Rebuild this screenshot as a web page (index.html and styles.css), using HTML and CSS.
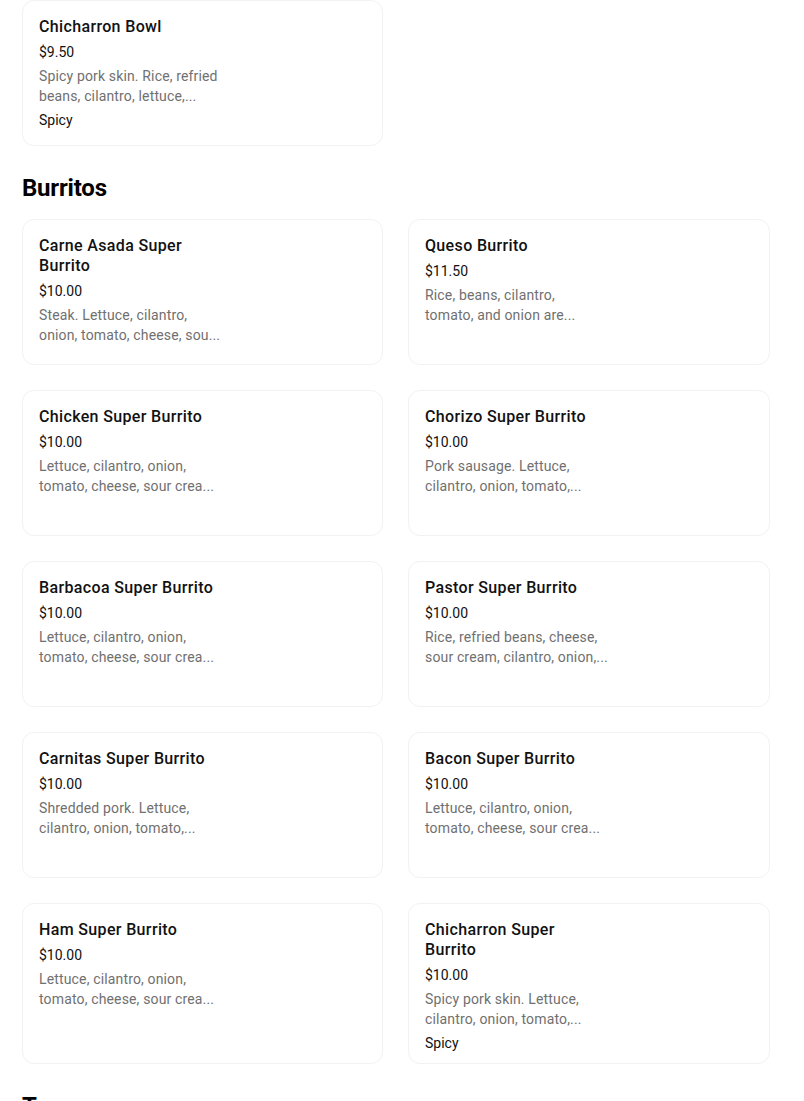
FILE: index.html
```html
<!DOCTYPE html>
<html lang="en">
<head>
<meta charset="utf-8">
<title>Menu</title>
<link rel="stylesheet" href="styles.css">
</head>
<body>
<main class="page">
  <section class="section">
    <div class="grid">
      <article class="card">
        <div class="info">
          <h3 class="title">Chicharron Bowl</h3>
          <div class="price">$9.50</div>
          <p class="desc"><span>Spicy pork skin. Rice, refried</span><span>beans, cilantro, lettuce,...</span></p>
          <div class="tag">Spicy</div>
        </div>
      </article>
    </div>
  </section>

  <section class="section">
    <h2 class="heading">Burritos</h2>
    <div class="grid">
      <article class="card">
        <div class="info">
          <h3 class="title"><span>Carne Asada Super</span><span>Burrito</span></h3>
          <div class="price">$10.00</div>
          <p class="desc"><span>Steak. Lettuce, cilantro,</span><span>onion, tomato, cheese, sou...</span></p>
        </div>
      </article>
      <article class="card">
        <div class="info">
          <h3 class="title">Queso Burrito</h3>
          <div class="price">$11.50</div>
          <p class="desc"><span>Rice, beans, cilantro,</span><span>tomato, and onion are...</span></p>
        </div>
      </article>
      <article class="card">
        <div class="info">
          <h3 class="title">Chicken Super Burrito</h3>
          <div class="price">$10.00</div>
          <p class="desc"><span>Lettuce, cilantro, onion,</span><span>tomato, cheese, sour crea...</span></p>
        </div>
      </article>
      <article class="card">
        <div class="info">
          <h3 class="title">Chorizo Super Burrito</h3>
          <div class="price">$10.00</div>
          <p class="desc"><span>Pork sausage. Lettuce,</span><span>cilantro, onion, tomato,...</span></p>
        </div>
      </article>
      <article class="card">
        <div class="info">
          <h3 class="title">Barbacoa Super Burrito</h3>
          <div class="price">$10.00</div>
          <p class="desc"><span>Lettuce, cilantro, onion,</span><span>tomato, cheese, sour crea...</span></p>
        </div>
      </article>
      <article class="card">
        <div class="info">
          <h3 class="title">Pastor Super Burrito</h3>
          <div class="price">$10.00</div>
          <p class="desc"><span>Rice, refried beans, cheese,</span><span>sour cream, cilantro, onion,...</span></p>
        </div>
      </article>
      <article class="card">
        <div class="info">
          <h3 class="title">Carnitas Super Burrito</h3>
          <div class="price">$10.00</div>
          <p class="desc"><span>Shredded pork. Lettuce,</span><span>cilantro, onion, tomato,...</span></p>
        </div>
      </article>
      <article class="card">
        <div class="info">
          <h3 class="title">Bacon Super Burrito</h3>
          <div class="price">$10.00</div>
          <p class="desc"><span>Lettuce, cilantro, onion,</span><span>tomato, cheese, sour crea...</span></p>
        </div>
      </article>
      <article class="card">
        <div class="info">
          <h3 class="title">Ham Super Burrito</h3>
          <div class="price">$10.00</div>
          <p class="desc"><span>Lettuce, cilantro, onion,</span><span>tomato, cheese, sour crea...</span></p>
        </div>
      </article>
      <article class="card">
        <div class="info">
          <h3 class="title"><span>Chicharron Super</span><span>Burrito</span></h3>
          <div class="price">$10.00</div>
          <p class="desc"><span>Spicy pork skin. Lettuce,</span><span>cilantro, onion, tomato,...</span></p>
          <div class="tag">Spicy</div>
        </div>
      </article>
    </div>
  </section>

  <section class="section">
    <h2 class="heading">Tacos</h2>
  </section>
</main>
</body>
</html>
```

FILE: styles.css
```css
* {
  box-sizing: border-box;
}

html, body {
  margin: 0;
  padding: 0;
  background: #ffffff;
}

body {
  font-family: Roboto, "Liberation Sans", sans-serif;
  color: #000000;
  -webkit-font-smoothing: antialiased;
}

.page {
  padding: 0 34px 0 22px;
}

.section + .section {
  padding-top: 28px;
}

.heading {
  margin: 0 0 17px;
  font-size: 24px;
  line-height: 28px;
  font-weight: 700;
  letter-spacing: -0.2px;
}

.grid {
  display: grid;
  grid-template-columns: 361px 362px;
  column-gap: 25px;
  row-gap: 25px;
}

.card {
  display: flex;
  min-height: 146px;
  padding: 16px 16px 10px;
  border: 1px solid #f2f2f2;
  border-radius: 12px;
  background: #ffffff;
}

.info {
  width: 210px;
  display: flex;
  flex-direction: column;
}

.title {
  margin: 0;
  font-size: 16px;
  line-height: 20px;
  font-weight: 500;
  letter-spacing: 0.35px;
  color: #111111;
}

.title span,
.desc span {
  display: block;
  white-space: nowrap;
}

.price {
  margin-top: 5px;
  font-size: 14px;
  line-height: 20px;
  color: #111111;
}

.desc {
  margin: 4px 0 0;
  font-size: 14px;
  line-height: 20px;
  letter-spacing: 0.15px;
  color: #707070;
}

.tag {
  margin-top: 4px;
  font-size: 14px;
  line-height: 20px;
  color: #111111;
}
```
